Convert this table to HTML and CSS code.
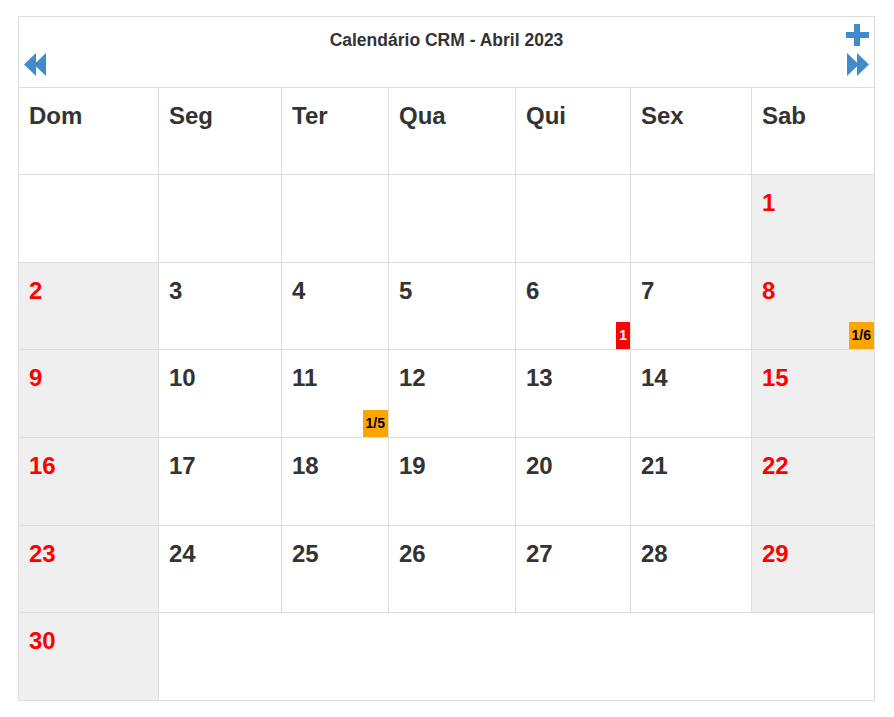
FILE: index.html
```html
<!DOCTYPE html>
<html lang="pt">
<head>
<meta charset="utf-8">
<title>Calendário CRM</title>
<link rel="stylesheet" href="styles.css">
</head>
<body>
<div class="wrap">
<table class="cal">
  <colgroup>
    <col class="c1"><col class="c2"><col class="c3"><col class="c4"><col class="c5"><col class="c6"><col class="c7">
  </colgroup>
  <tr class="title-row">
    <th colspan="7" class="title-cell">
      <div class="title-top">
        <span class="spacer"></span>
        <span class="title">Calendário CRM - Abril 2023</span>
        <svg class="icon plus" viewBox="0 0 23 22" width="23" height="22"><path d="M8 0h6v8h9v6h-9v8h-6v-8h-8v-6h8z" fill="#428bca"/></svg>
      </div>
      <div class="title-nav">
        <svg class="icon" viewBox="0 0 22 23" width="22" height="23"><polygon points="0,11.5 12,0 12,23" fill="#428bca"/><polygon points="10,11.5 22,0 22,23" fill="#428bca"/></svg>
        <svg class="icon" viewBox="0 0 22 23" width="22" height="23"><polygon points="22,11.5 10,0 10,23" fill="#428bca"/><polygon points="12,11.5 0,0 0,23" fill="#428bca"/></svg>
      </div>
    </th>
  </tr>
  <tr class="head-row">
    <th>Dom</th><th>Seg</th><th>Ter</th><th>Qua</th><th>Qui</th><th>Sex</th><th>Sab</th>
  </tr>
  <tr class="week">
    <td></td><td></td><td></td><td></td><td></td><td></td><td class="we">1</td>
  </tr>
  <tr class="week">
    <td class="we">2</td><td>3</td><td>4</td><td>5</td><td>6<span class="badge red">1</span></td><td>7</td><td class="we">8<span class="badge orange">1/6</span></td>
  </tr>
  <tr class="week">
    <td class="we">9</td><td>10</td><td>11<span class="badge orange">1/5</span></td><td>12</td><td>13</td><td>14</td><td class="we">15</td>
  </tr>
  <tr class="week">
    <td class="we">16</td><td>17</td><td>18</td><td>19</td><td>20</td><td>21</td><td class="we">22</td>
  </tr>
  <tr class="week">
    <td class="we">23</td><td>24</td><td>25</td><td>26</td><td>27</td><td>28</td><td class="we">29</td>
  </tr>
  <tr class="week">
    <td class="we">30</td><td colspan="6"></td>
  </tr>
</table>
</div>
</body>
</html>
```
FILE: styles.css
```css
html, body {
  margin: 0;
  padding: 0;
  background: #fff;
}
body {
  font-family: "Liberation Sans", Arial, sans-serif;
  color: #333;
}
.wrap {
  padding: 16px 19px 16px 18px;
}
.cal {
  width: 857px;
  border-collapse: collapse;
  table-layout: fixed;
}
.c1 { width: 140px; }
.c2 { width: 123px; }
.c3 { width: 107px; }
.c4 { width: 127px; }
.c5 { width: 115px; }
.c6 { width: 121px; }
.c7 { width: 123px; }
.cal th, .cal td {
  border: 1px solid #ddd;
  padding: 0;
  vertical-align: top;
  text-align: left;
  box-sizing: border-box;
}
.title-row { height: 71px; }
.title-row .title-cell {
  padding: 5px 5px 0 5px;
}
.title-top {
  display: flex;
  align-items: flex-start;
  justify-content: space-between;
}
.spacer { width: 23px; }
.title {
  font-size: 17.5px;
  font-weight: bold;
  color: #333;
  padding-top: 8px;
  line-height: 20px;
}
.plus { margin-top: 2px; }
.title-nav {
  display: flex;
  justify-content: space-between;
  margin-top: 3px;
}
.icon { display: block; }
.head-row { height: 87px; }
.head-row th {
  font-size: 24px;
  font-weight: bold;
  padding: 14px 10px 0 10px;
  line-height: 28px;
}
.week { height: 87.67px; }
.week td {
  font-size: 24px;
  font-weight: bold;
  padding: 14px 10px 0 10px;
  line-height: 28px;
  position: relative;
}
.week td.we {
  background: #efefef;
  color: #f00;
}
.badge {
  position: absolute;
  right: 0;
  bottom: 0;
  height: 27px;
  line-height: 27px;
  font-size: 14px;
  font-weight: bold;
  padding: 0 3px;
  text-align: center;
}
.badge.red {
  background: #f00;
  color: #fff;
}
.badge.orange {
  background: #ffa500;
  color: #000;
}
```
